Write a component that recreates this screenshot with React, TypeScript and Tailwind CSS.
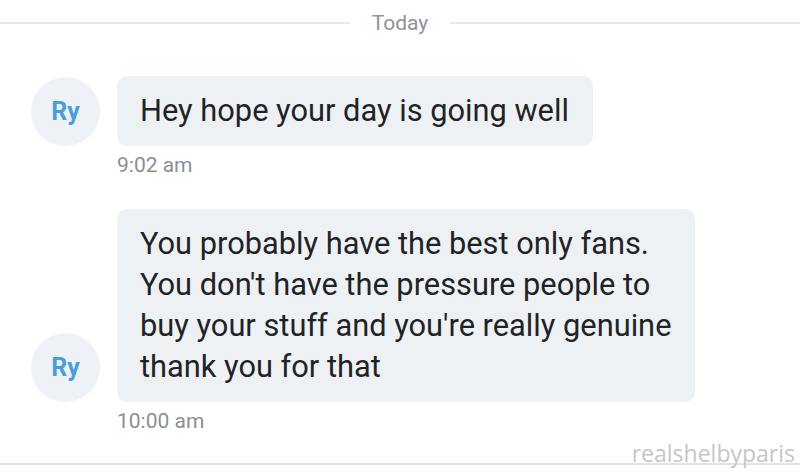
import React from "react";

function Avatar() {
  return (
    <div className="flex h-[69px] w-[69px] flex-shrink-0 items-center justify-center rounded-full bg-[#eef1f5] text-[25px] font-bold text-[#4a9fd6]">
      Ry
    </div>
  );
}

function Message({ lines, time }: { lines: string[]; time: string }) {
  return (
    <div className="flex flex-col">
      <div className="flex items-end gap-[17px] pl-[31px]">
        <Avatar />
        <div className="rounded-[10px] bg-[#eef1f4] pb-[15px] pl-[23px] pr-[24px] pt-[14px] text-[30.8px] leading-[41px] text-[#1f2326]">
          {lines.map((l) => (
            <div key={l} className="whitespace-nowrap">
              {l}
            </div>
          ))}
        </div>
      </div>
      <div className="mt-[7px] pl-[117px] text-[21px] leading-[24px] text-[#8a8f96]">{time}</div>
    </div>
  );
}

export default function App() {
  return (
    <div className="relative h-[472px] w-[800px] overflow-hidden bg-white font-['Roboto',sans-serif]">
      <div className="flex h-[44px] items-center pt-[1px]">
        <div className="h-[2px] flex-1 bg-[#e6e8eb]" />
        <span className="px-[22px] text-[21px] leading-[24px] text-[#8e939a]">Today</span>
        <div className="h-[2px] flex-1 bg-[#e6e8eb]" />
      </div>
      <div className="mt-[32px] flex flex-col gap-[32px]">
        <Message lines={["Hey hope your day is going well"]} time="9:02 am" />
        <Message
          lines={[
            "You probably have the best only fans.",
            "You don't have the pressure people to",
            "buy your stuff and you're really genuine",
            "thank you for that",
          ]}
          time="10:00 am"
        />
      </div>
      <div className="absolute bottom-[7px] left-0 right-0 h-[2px] bg-[#e3e3e3]" />
      <div className="absolute bottom-[4px] right-[5px] font-['Open_Sans',sans-serif] text-[23px] leading-[30px] text-[#c6c6c6]">
        realshelbyparis
      </div>
    </div>
  );
}
